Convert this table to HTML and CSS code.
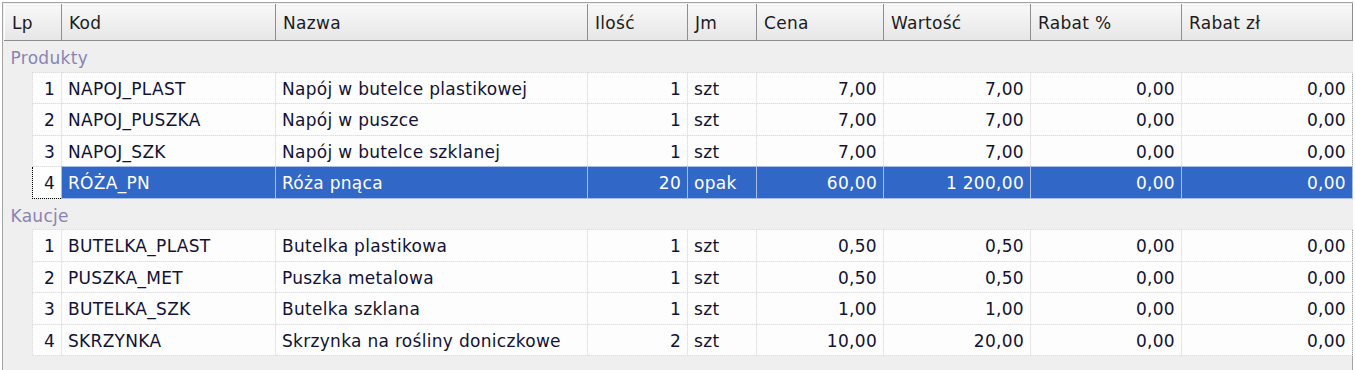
FILE: index.html
```html
<!DOCTYPE html>
<html lang="pl">
<head>
    <meta charset="UTF-8">
    <title>Pozycje dokumentu</title>
    <link rel="stylesheet" href="styles.css">
</head>
<body>
    <div class="grid-frame">
        <table class="grid">
            <colgroup>
                <col class="c-gutter"><col class="c-lp"><col class="c-kod"><col class="c-nazwa">
                <col class="c-ilosc"><col class="c-jm"><col class="c-cena"><col class="c-wartosc">
                <col class="c-rabatp"><col class="c-rabatz">
            </colgroup>
            <thead>
                <tr>
                    <th colspan="2">Lp</th>
                    <th>Kod</th>
                    <th>Nazwa</th>
                    <th>Ilość</th>
                    <th>Jm</th>
                    <th>Cena</th>
                    <th>Wartość</th>
                    <th>Rabat %</th>
                    <th>Rabat zł</th>
                </tr>
            </thead>
            <tbody>
                <tr class="group-row"><td colspan="10">Produkty</td></tr>
                <tr>
                    <td class="gutter"></td><td class="num">1</td><td>NAPOJ_PLAST</td><td>Napój w butelce plastikowej</td>
                    <td class="num">1</td><td>szt</td><td class="num">7,00</td><td class="num">7,00</td><td class="num">0,00</td><td class="num">0,00</td>
                </tr>
                <tr>
                    <td class="gutter"></td><td class="num">2</td><td>NAPOJ_PUSZKA</td><td>Napój w puszce</td>
                    <td class="num">1</td><td>szt</td><td class="num">7,00</td><td class="num">7,00</td><td class="num">0,00</td><td class="num">0,00</td>
                </tr>
                <tr>
                    <td class="gutter"></td><td class="num">3</td><td>NAPOJ_SZK</td><td>Napój w butelce szklanej</td>
                    <td class="num">1</td><td>szt</td><td class="num">7,00</td><td class="num">7,00</td><td class="num">0,00</td><td class="num">0,00</td>
                </tr>
                <tr class="selected">
                    <td class="gutter"></td><td class="num focus">4</td><td>RÓŻA_PN</td><td>Róża pnąca</td>
                    <td class="num">20</td><td>opak</td><td class="num">60,00</td><td class="num">1 200,00</td><td class="num">0,00</td><td class="num">0,00</td>
                </tr>
                <tr class="group-row"><td colspan="10">Kaucje</td></tr>
                <tr>
                    <td class="gutter"></td><td class="num">1</td><td>BUTELKA_PLAST</td><td>Butelka plastikowa</td>
                    <td class="num">1</td><td>szt</td><td class="num">0,50</td><td class="num">0,50</td><td class="num">0,00</td><td class="num">0,00</td>
                </tr>
                <tr>
                    <td class="gutter"></td><td class="num">2</td><td>PUSZKA_MET</td><td>Puszka metalowa</td>
                    <td class="num">1</td><td>szt</td><td class="num">0,50</td><td class="num">0,50</td><td class="num">0,00</td><td class="num">0,00</td>
                </tr>
                <tr>
                    <td class="gutter"></td><td class="num">3</td><td>BUTELKA_SZK</td><td>Butelka szklana</td>
                    <td class="num">1</td><td>szt</td><td class="num">1,00</td><td class="num">1,00</td><td class="num">0,00</td><td class="num">0,00</td>
                </tr>
                <tr>
                    <td class="gutter"></td><td class="num">4</td><td>SKRZYNKA</td><td>Skrzynka na rośliny doniczkowe</td>
                    <td class="num">2</td><td>szt</td><td class="num">10,00</td><td class="num">20,00</td><td class="num">0,00</td><td class="num">0,00</td>
                </tr>
            </tbody>
        </table>
    </div>
</body>
</html>
```

FILE: styles.css
```css
* {
    margin: 0;
    padding: 0;
    box-sizing: border-box;
}

body {
    background: #ffffff;
    font-family: 'DejaVu Sans', sans-serif;
    font-size: 17px;
    letter-spacing: 0.3px;
    color: #121234;
    padding: 2px;
    overflow: hidden;
}

.grid-frame {
    border: 1px solid #a4a4a4;
    padding: 1px;
    background: #efefef;
    height: 400px;
}

.grid {
    border-collapse: collapse;
    table-layout: fixed;
    width: 1348px;
}

.c-gutter { width: 28px; }
.c-lp { width: 29px; }
.c-kod { width: 214px; }
.c-nazwa { width: 312px; }
.c-ilosc { width: 100px; }
.c-jm { width: 69px; }
.c-cena { width: 127px; }
.c-wartosc { width: 147px; }
.c-rabatp { width: 151px; }
.c-rabatz { width: 171px; }

.grid th {
    height: 36px;
    text-align: left;
    font-weight: normal;
    color: #1c1c1c;
    padding: 0 7px;
    background: linear-gradient(#f8f8f8, #e6e6e6);
    border-top: 1px solid #ffffff;
    border-left: 1px solid #ffffff;
    border-right: 1px solid #8e8e8e;
    border-bottom: 1px solid #8e8e8e;
    white-space: nowrap;
}

.grid td {
    height: 31.5px;
    padding: 2px 6px 0;
    background: #fdfdfd;
    border: 1px dotted #dedede;
    white-space: nowrap;
    overflow: hidden;
}

.grid td.gutter {
    background: #efefef;
    border: none;
    border-right: 1px dotted #dedede;
}

.grid td.num {
    text-align: right;
}

.grid .group-row td {
    background: #efefef;
    border: none;
    color: #8a84b2;
    padding: 4px 6px 0;
}

.grid .selected td {
    background: #3167c6;
    color: #ffffff;
    border-color: #a8bce4;
    border-style: solid;
}

.grid .selected td.gutter {
    background: #efefef;
    border: none;
}

.grid .selected td.focus {
    background: #ffffff;
    color: #121234;
    border: 1px dotted #000000;
}
```
